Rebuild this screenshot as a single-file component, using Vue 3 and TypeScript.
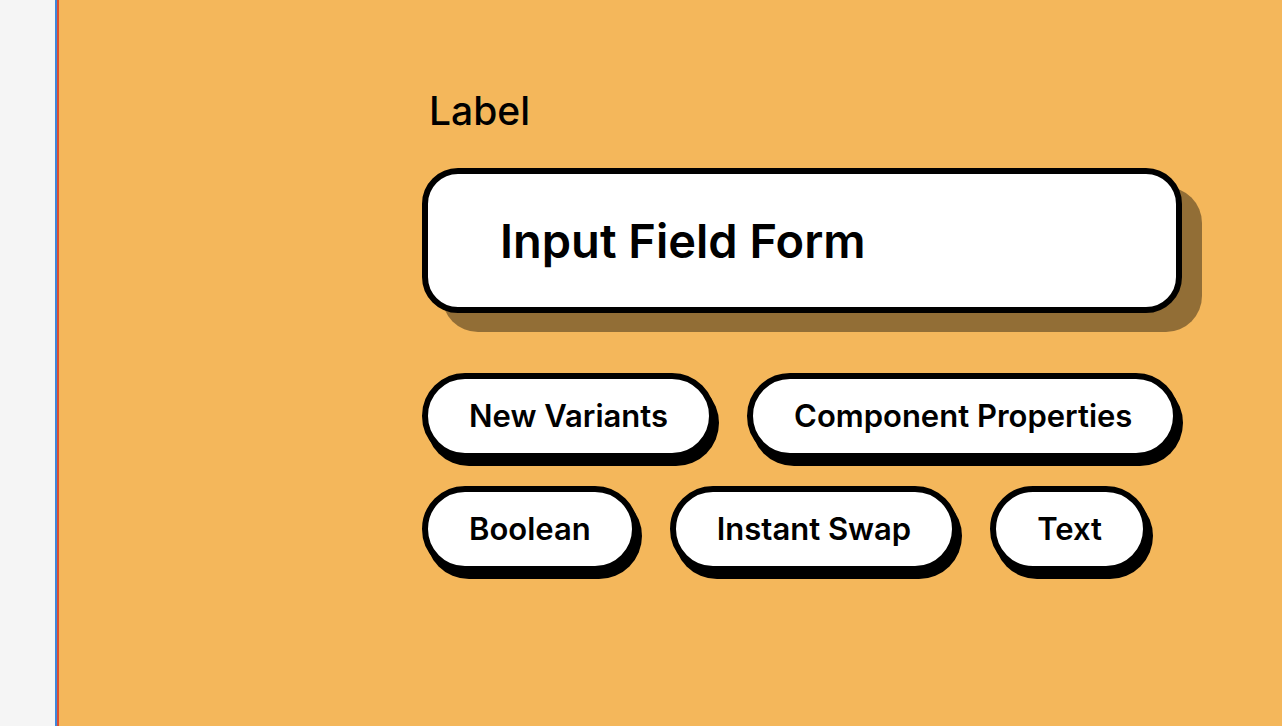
<script setup lang="ts">
import { ref } from 'vue'

const fieldValue = ref<string>('Input Field Form')
const rows: string[][] = [
  ['New Variants', 'Component Properties'],
  ['Boolean', 'Instant Swap', 'Text'],
]
</script>

<template>
  <div class="page">
    <aside class="gutter"></aside>
    <main class="canvas">
      <label class="label" for="field">Label</label>
      <input id="field" v-model="fieldValue" class="field" type="text" />
      <div class="rows">
        <div v-for="(row, index) in rows" :key="index" class="row">
          <button v-for="name in row" :key="name" class="pill" type="button">{{ name }}</button>
        </div>
      </div>
    </main>
  </div>
</template>

<style>
body {
  margin: 0;
  background: #f4b75b;
}
</style>

<style scoped>
.page {
  display: flex;
  min-height: 100vh;
  font-family: Inter, "Liberation Sans", sans-serif;
  color: #000;
}

.gutter {
  flex: none;
  width: 55px;
  background: #f5f5f5;
  border-right: 2px solid #3f87dc;
}

.canvas {
  flex: 1;
  min-width: 0;
  box-sizing: border-box;
  padding: 87px 100px 87px 363px;
  border-left: 2px solid #dc5032;
  background: #f4b75b;
}

.label {
  display: block;
  padding-left: 7px;
  font-size: 39px;
  line-height: 48px;
  font-weight: 500;
}

.field {
  display: block;
  box-sizing: border-box;
  width: 100%;
  height: 145px;
  margin: 33px 0 0;
  padding: 0 72px;
  border: 6px solid #000;
  border-radius: 36px;
  background: #fff;
  box-shadow: 20px 19px 0 rgba(0, 0, 0, 0.4);
  color: #000;
  font-family: inherit;
  font-size: 47px;
  font-weight: 600;
  outline: none;
}

.rows {
  display: flex;
  flex-direction: column;
  gap: 27px;
  margin-top: 60px;
}

.row {
  display: flex;
  gap: 32px;
}

.pill {
  flex: none;
  height: 86px;
  margin: 0;
  padding: 0 41px;
  border: 6px solid #000;
  border-radius: 43px;
  background: #fff;
  box-shadow: 4px 7px 0 #000;
  color: #000;
  font-family: inherit;
  font-size: 31px;
  line-height: 40px;
  font-weight: 600;
  white-space: nowrap;
  cursor: pointer;
}
</style>
